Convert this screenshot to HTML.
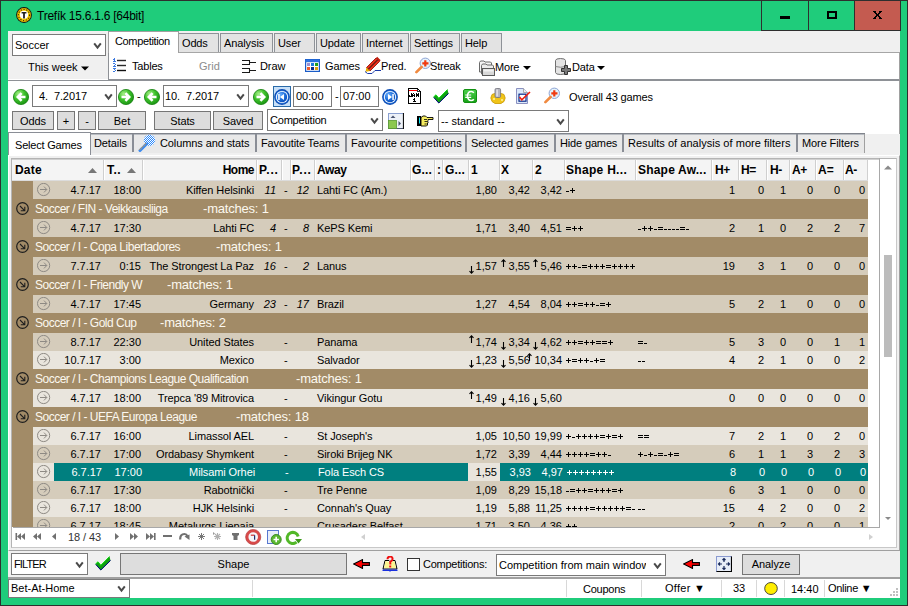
<!DOCTYPE html><html><head><meta charset="utf-8"><style>
*{margin:0;padding:0;box-sizing:border-box}
html,body{width:908px;height:606px;overflow:hidden;background:#2e2e2e}
body{position:relative;font-family:"Liberation Sans", sans-serif;font-size:11px;color:#000}
div,svg{position:absolute}
.t{white-space:nowrap;line-height:13px;font-size:11px}
.b{font-weight:bold}
</style></head><body><div style="left:1px;top:1px;width:906px;height:604px;background:#1fcc7b"></div>
<div style="left:8px;top:31px;width:892px;height:567px;background:#f0f0f0"></div>
<svg style="left:16px;top:7px" width="16" height="16" viewBox="0 0 16 16"><circle cx="8" cy="8" r="7.9" fill="#111"/><circle cx="8" cy="8" r="6.9" fill="#f0c800"/>
<circle cx="8" cy="8" r="5.6" fill="none" stroke="#3a2a00" stroke-width="1.1" stroke-dasharray="1.2 1.6"/><circle cx="8" cy="8" r="6.5" fill="none" stroke="#c89a00" stroke-width="0.6"/>
<circle cx="8" cy="7.8" r="4.1" fill="#fff"/><path d="M5.6 5 H10.4 V6.6 H8.9 V11.6 H7.1 V6.6 H5.6 Z" fill="#222"/></svg>
<div class="t" style="left:37px;top:8px;font-size:12px;line-height:16px;letter-spacing:-0.25px">Trefík 15.6.1.6 [64bit]</div>
<div style="left:761px;top:0px;width:140px;height:31px;border:1px solid #2e2e2e;background:#1fcc7b"></div>
<div style="left:808px;top:0px;width:1px;height:31px;background:#2e2e2e"></div>
<div style="left:854px;top:0px;width:1px;height:31px;background:#2e2e2e"></div>
<div style="left:855px;top:1px;width:45px;height:29px;background:#c45b50"></div>
<div style="left:780px;top:16px;width:10px;height:3px;background:#000"></div>
<div style="left:827px;top:11px;width:10px;height:8px;border:2px solid #000"></div>
<svg style="left:873px;top:11px" width="9" height="8" viewBox="0 0 9 8"><g fill="#000" shape-rendering="crispEdges"><rect x="0" y="0" width="1" height="1"/><rect x="1" y="0" width="1" height="1"/><rect x="2" y="0" width="1" height="1"/><rect x="6" y="0" width="1" height="1"/><rect x="7" y="0" width="1" height="1"/><rect x="8" y="0" width="1" height="1"/><rect x="1" y="1" width="1" height="1"/><rect x="2" y="1" width="1" height="1"/><rect x="6" y="1" width="1" height="1"/><rect x="7" y="1" width="1" height="1"/><rect x="2" y="2" width="1" height="1"/><rect x="3" y="2" width="1" height="1"/><rect x="5" y="2" width="1" height="1"/><rect x="6" y="2" width="1" height="1"/><rect x="3" y="3" width="1" height="1"/><rect x="4" y="3" width="1" height="1"/><rect x="5" y="3" width="1" height="1"/><rect x="3" y="4" width="1" height="1"/><rect x="4" y="4" width="1" height="1"/><rect x="5" y="4" width="1" height="1"/><rect x="2" y="5" width="1" height="1"/><rect x="3" y="5" width="1" height="1"/><rect x="5" y="5" width="1" height="1"/><rect x="6" y="5" width="1" height="1"/><rect x="1" y="6" width="1" height="1"/><rect x="2" y="6" width="1" height="1"/><rect x="6" y="6" width="1" height="1"/><rect x="7" y="6" width="1" height="1"/><rect x="0" y="7" width="1" height="1"/><rect x="1" y="7" width="1" height="1"/><rect x="2" y="7" width="1" height="1"/><rect x="6" y="7" width="1" height="1"/><rect x="7" y="7" width="1" height="1"/><rect x="8" y="7" width="1" height="1"/></g></svg>
<div style="left:12px;top:34px;width:94px;height:22px;border:1px solid #7a7a7a;background:#fff"></div>
<div style="left:13px;top:35px;width:73px;height:20px;overflow:hidden">
<div class="t" style="left:2px;top:4px;letter-spacing:0px">Soccer</div>
</div>
<svg style="left:93px;top:42px" width="9" height="8" viewBox="0 0 9 8"><path d="M1.2 1.3 L4.5 5.6 L7.8 1.3" stroke="#4a4a4a" stroke-width="2" fill="none"/></svg>
<div class="t" style="left:28px;top:61px;">This week</div>
<svg style="left:81px;top:66px" width="8" height="5" viewBox="0 0 8 5"><path d="M0 0.5 H8 L4 4.5 Z" fill="#000"/></svg>
<div style="left:178px;top:33px;width:41px;height:20px;background:#e3e3e3;border:1px solid #8e9298;border-bottom:none"></div>
<div class="t" style="left:182px;top:37px;letter-spacing:-0.15px">Odds</div>
<div style="left:220px;top:33px;width:53px;height:20px;background:#e3e3e3;border:1px solid #8e9298;border-bottom:none"></div>
<div class="t" style="left:224px;top:37px;letter-spacing:-0.1px">Analysis</div>
<div style="left:274px;top:33px;width:41px;height:20px;background:#e3e3e3;border:1px solid #8e9298;border-bottom:none"></div>
<div class="t" style="left:278px;top:37px;letter-spacing:-0.1px">User</div>
<div style="left:316px;top:33px;width:45px;height:20px;background:#e3e3e3;border:1px solid #8e9298;border-bottom:none"></div>
<div class="t" style="left:320px;top:37px;letter-spacing:-0.1px">Update</div>
<div style="left:362px;top:33px;width:47px;height:20px;background:#e3e3e3;border:1px solid #8e9298;border-bottom:none"></div>
<div class="t" style="left:366px;top:37px;letter-spacing:-0.1px">Internet</div>
<div style="left:410px;top:33px;width:50px;height:20px;background:#e3e3e3;border:1px solid #8e9298;border-bottom:none"></div>
<div class="t" style="left:414px;top:37px;letter-spacing:-0.1px">Settings</div>
<div style="left:461px;top:33px;width:41px;height:20px;background:#e3e3e3;border:1px solid #8e9298;border-bottom:none"></div>
<div class="t" style="left:465px;top:37px;letter-spacing:-0.1px">Help</div>
<div style="left:8px;top:79px;width:100px;height:1px;background:#fff"></div>
<div style="left:8px;top:80px;width:100px;height:1px;background:#8e9196"></div>
<div style="left:108px;top:52px;width:792px;height:29px;background:#fff;border-left:1px solid #8e9196;border-top:1px solid #a6a6a6;border-right:1px solid #a0a0a0;border-bottom:2px solid #8e9196"></div>
<div style="left:108px;top:31px;width:71px;height:22px;background:#fff;border:1px solid #a0a0a0;border-bottom:none"></div>
<div class="t" style="left:115px;top:35px;letter-spacing:-0.35px">Competition</div>
<svg style="left:112px;top:57px" width="15" height="16" viewBox="0 0 15 16"><rect x="2" y="1" width="1" height="1" fill="#3a78e0"/><rect x="1" y="2" width="1" height="1" fill="#3a78e0"/><rect x="2" y="2" width="1" height="1" fill="#3a78e0"/><rect x="2" y="3" width="1" height="1" fill="#3a78e0"/><rect x="1" y="4" width="1" height="1" fill="#3a78e0"/><rect x="2" y="4" width="1" height="1" fill="#3a78e0"/><rect x="3" y="4" width="1" height="1" fill="#3a78e0"/><rect x="1" y="6" width="1" height="1" fill="#3a78e0"/><rect x="2" y="6" width="1" height="1" fill="#3a78e0"/><rect x="3" y="7" width="1" height="1" fill="#3a78e0"/><rect x="2" y="8" width="1" height="1" fill="#3a78e0"/><rect x="1" y="9" width="1" height="1" fill="#3a78e0"/><rect x="2" y="9" width="1" height="1" fill="#3a78e0"/><rect x="3" y="9" width="1" height="1" fill="#3a78e0"/><rect x="1" y="11" width="1" height="1" fill="#3a78e0"/><rect x="2" y="11" width="1" height="1" fill="#3a78e0"/><rect x="3" y="11" width="1" height="1" fill="#3a78e0"/><rect x="2" y="12" width="1" height="1" fill="#3a78e0"/><rect x="3" y="13" width="1" height="1" fill="#3a78e0"/><rect x="1" y="14" width="1" height="1" fill="#3a78e0"/><rect x="2" y="14" width="1" height="1" fill="#3a78e0"/><rect x="5" y="2.8" width="9" height="1.4" fill="#2a2a2a"/><rect x="5" y="7.8" width="9" height="1.4" fill="#2a2a2a"/><rect x="5" y="12.8" width="9" height="1.4" fill="#111"/></svg>
<div class="t" style="left:132px;top:60px;letter-spacing:-0.2px">Tables</div>
<div class="t" style="left:199px;top:60px;color:#8c8c8c">Grid</div>
<svg style="left:241px;top:59px" width="16" height="15" viewBox="0 0 16 15"><path d="M1 1.5 H8.5 V5.5 H1 M8.5 3.5 H15 M1 9.5 H8.5 V13.5 H1 M8.5 11.5 H15" stroke="#1a1a1a" stroke-width="1.05" fill="none"/></svg>
<div class="t" style="left:260px;top:60px;letter-spacing:-0.1px">Draw</div>
<svg style="left:305px;top:59px" width="15" height="13" viewBox="0 0 15 13"><rect x="0.6" y="0.6" width="13.8" height="11.8" fill="#fff" stroke="#1a5cc8" stroke-width="1.2"/><rect x="0.6" y="0.6" width="13.8" height="2.6" fill="#2a74e0"/>
<rect x="2" y="4" width="3" height="3" fill="#9c8fd0"/><rect x="6" y="4" width="3" height="3" fill="#1a7ae0"/><rect x="10" y="4" width="3" height="3" fill="#20a020"/>
<rect x="2" y="8" width="3" height="3" fill="#f05a28"/><rect x="6" y="8" width="3" height="3" fill="#0a2a90"/><rect x="10" y="8" width="3" height="3" fill="#e0a010"/></svg>
<div class="t" style="left:325px;top:60px;letter-spacing:-0.1px">Games</div>
<svg style="left:364px;top:56px" width="18" height="19" viewBox="0 0 18 19"><path d="M2.5 11.5 L12 2 L15.5 5.5 L6 15 Z" fill="#e8301c" stroke="#8a0a00" stroke-width="0.8"/><path d="M4.2 13.3 L13.7 3.8" stroke="#111" stroke-width="1"/><path d="M12 2 L13.2 0.8 L16.7 4.3 L15.5 5.5 Z" fill="#c02010"/>
<path d="M2.5 11.5 L1.5 15.8 L6 15 Z" fill="#e8b000"/><path d="M1 15.5 L3.5 17.5 H8 L11 14.5 H17" stroke="#1a3aa8" stroke-width="1" fill="none"/></svg>
<div class="t" style="left:381px;top:60px;letter-spacing:-0.2px">Pred.</div>
<svg style="left:414px;top:57px" width="17" height="17" viewBox="0 0 17 17"><circle cx="11.3" cy="6.3" r="5.2" fill="#e4f3fc" stroke="#8fa4d4" stroke-width="1"/><path d="M11.3 3.3 V9.5 M8.3 6.4 H14.5" stroke="#f03a10" stroke-width="2.2"/>
<path d="M7.6 10 L2.4 15.2" stroke="#f08a40" stroke-width="2.6" stroke-linecap="round"/></svg>
<div class="t" style="left:430px;top:60px;letter-spacing:-0.2px">Streak</div>
<svg style="left:479px;top:60px" width="17" height="16" viewBox="0 0 17 16"><path d="M0.5 2.5 L1.5 1 H5 L6 2 H11.5 L12.5 3 V12 H0.5 Z" fill="#f4f4f4" stroke="#6a6a6a"/>
<path d="M2.5 5.5 L3.5 4 H7 L8 5 H13.5 L14.5 6 V14 H2.5 Z" fill="#ececec" stroke="#6a6a6a"/><rect x="3.5" y="8.5" width="12" height="7" fill="#d8d8d8" stroke="#5a5a5a"/><rect x="4.5" y="9.5" width="10" height="2" fill="#f2f2f2"/></svg>
<div class="t" style="left:495px;top:61px;letter-spacing:-0.2px">More</div>
<svg style="left:523px;top:66px" width="8" height="4" viewBox="0 0 8 4"><path d="M0 0 H8 L4.0 4 Z" fill="#000"/></svg>
<svg style="left:554px;top:58px" width="20" height="18" viewBox="0 0 20 18"><path d="M1.5 2.5 Q1.5 0.5 6.5 0.5 Q11.5 0.5 11.5 2.5 V14.5 Q11.5 16.5 6.5 16.5 Q1.5 16.5 1.5 14.5 Z" fill="#e4e4e4" stroke="#707070"/>
<path d="M1.5 8.5 Q6.5 10 11.5 8.5" stroke="#888" fill="none"/><path d="M7.5 10.5 H10.5 V7.5 H13.5 V10.5 H16.5 V13.5 H13.5 V16.5 H10.5 V13.5 H7.5 Z" fill="#7a7a7a" stroke="#333"/></svg>
<div class="t" style="left:572px;top:61px;letter-spacing:-0.1px">Data</div>
<svg style="left:597px;top:66px" width="8" height="4" viewBox="0 0 8 4"><path d="M0 0 H8 L4.0 4 Z" fill="#000"/></svg>
<div style="left:8px;top:81px;width:892px;height:53px;background:#fff;border-right:1px solid #a0a0a0"></div>
<svg style="left:13px;top:89px" width="16" height="16" viewBox="0 0 16 16"><defs><radialGradient id="g13" cx="0.35" cy="0.3" r="0.75"><stop offset="0" stop-color="#a8f08a"/><stop offset="0.5" stop-color="#3cc02a"/><stop offset="1" stop-color="#1a9412"/></radialGradient></defs>
<circle cx="8" cy="8" r="7.6" fill="url(#g13)" stroke="#14800e" stroke-width="0.8"/><path d="M12.5 8 H5 M8.6 4.2 L4.8 8 L8.6 11.8" stroke="#fff" stroke-width="2.6" fill="none"/></svg>
<div style="left:32px;top:85px;width:85px;height:22px;border:1px solid #7a7a7a;background:#fff"></div>
<div style="left:33px;top:86px;width:64px;height:20px;overflow:hidden">
<div class="t" style="left:6px;top:4px;letter-spacing:-0.1px">4.&nbsp; 7.2017</div>
</div>
<svg style="left:104px;top:93px" width="9" height="8" viewBox="0 0 9 8"><path d="M1.2 1.3 L4.5 5.6 L7.8 1.3" stroke="#4a4a4a" stroke-width="2" fill="none"/></svg>
<svg style="left:118px;top:89px" width="16" height="16" viewBox="0 0 16 16"><defs><radialGradient id="g118" cx="0.35" cy="0.3" r="0.75"><stop offset="0" stop-color="#a8f08a"/><stop offset="0.5" stop-color="#3cc02a"/><stop offset="1" stop-color="#1a9412"/></radialGradient></defs>
<circle cx="8" cy="8" r="7.6" fill="url(#g118)" stroke="#14800e" stroke-width="0.8"/><path d="M3.5 8 H11 M7.4 4.2 L11.2 8 L7.4 11.8" stroke="#fff" stroke-width="2.6" fill="none"/></svg>
<div class="t" style="left:137px;top:90px;">-</div>
<svg style="left:144px;top:89px" width="16" height="16" viewBox="0 0 16 16"><defs><radialGradient id="g144" cx="0.35" cy="0.3" r="0.75"><stop offset="0" stop-color="#a8f08a"/><stop offset="0.5" stop-color="#3cc02a"/><stop offset="1" stop-color="#1a9412"/></radialGradient></defs>
<circle cx="8" cy="8" r="7.6" fill="url(#g144)" stroke="#14800e" stroke-width="0.8"/><path d="M12.5 8 H5 M8.6 4.2 L4.8 8 L8.6 11.8" stroke="#fff" stroke-width="2.6" fill="none"/></svg>
<div style="left:163px;top:85px;width:86px;height:22px;border:1px solid #7a7a7a;background:#fff"></div>
<div style="left:164px;top:86px;width:65px;height:20px;overflow:hidden">
<div class="t" style="left:1px;top:4px;letter-spacing:-0.1px">10.&nbsp; 7.2017</div>
</div>
<svg style="left:236px;top:93px" width="9" height="8" viewBox="0 0 9 8"><path d="M1.2 1.3 L4.5 5.6 L7.8 1.3" stroke="#4a4a4a" stroke-width="2" fill="none"/></svg>
<svg style="left:253px;top:89px" width="16" height="16" viewBox="0 0 16 16"><defs><radialGradient id="g253" cx="0.35" cy="0.3" r="0.75"><stop offset="0" stop-color="#a8f08a"/><stop offset="0.5" stop-color="#3cc02a"/><stop offset="1" stop-color="#1a9412"/></radialGradient></defs>
<circle cx="8" cy="8" r="7.6" fill="url(#g253)" stroke="#14800e" stroke-width="0.8"/><path d="M3.5 8 H11 M7.4 4.2 L11.2 8 L7.4 11.8" stroke="#fff" stroke-width="2.6" fill="none"/></svg>
<div style="left:273px;top:86px;width:18px;height:21px;background:#c8e0f8;border:1px solid #2a6aa8"></div>
<svg style="left:274px;top:89px" width="16" height="16" viewBox="0 0 16 16"><defs><radialGradient id="b274" cx="0.35" cy="0.3" r="0.8"><stop offset="0" stop-color="#6ab0ff"/><stop offset="0.6" stop-color="#1a6ad8"/><stop offset="1" stop-color="#0a48b0"/></radialGradient></defs>
<circle cx="8" cy="8" r="7.9" fill="#0c4cb4"/><circle cx="8" cy="8" r="6.6" fill="#3a86e8"/><circle cx="8" cy="8" r="6.1" fill="#fff"/><circle cx="8" cy="8" r="5.2" fill="url(#b274)"/><path d="M10 5 L6 8 L10 11 Z" fill="#fff"/><rect x="4.2" y="5" width="1.5" height="6" fill="#fff"/></svg>
<div style="left:293px;top:86px;width:39px;height:21px;border:1px solid #7a7a7a;background:#fff"></div>
<div class="t" style="left:296px;top:90px;">00:00</div>
<div class="t" style="left:335px;top:90px;">-</div>
<div style="left:340px;top:86px;width:39px;height:21px;border:1px solid #7a7a7a;background:#fff"></div>
<div class="t" style="left:343px;top:90px;">07:00</div>
<svg style="left:382px;top:89px" width="16" height="16" viewBox="0 0 16 16"><defs><radialGradient id="b382" cx="0.35" cy="0.3" r="0.8"><stop offset="0" stop-color="#6ab0ff"/><stop offset="0.6" stop-color="#1a6ad8"/><stop offset="1" stop-color="#0a48b0"/></radialGradient></defs>
<circle cx="8" cy="8" r="7.9" fill="#0c4cb4"/><circle cx="8" cy="8" r="6.6" fill="#3a86e8"/><circle cx="8" cy="8" r="6.1" fill="#fff"/><circle cx="8" cy="8" r="5.2" fill="url(#b382)"/><path d="M6 5 L10 8 L6 11 Z" fill="#fff"/><rect x="10.3" y="5" width="1.5" height="6" fill="#fff"/></svg>
<svg style="left:408px;top:88px" width="13" height="16" viewBox="0 0 13 16"><g shape-rendering="crispEdges"><path d="M0.5 0.5 H9.5 L12.5 3.5 V15.5 H0.5 Z" fill="#fff" stroke="#000" stroke-width="1.2"/><path d="M9.5 0.5 V3.5 H12.5" fill="none" stroke="#000" stroke-width="0.8"/><rect x="1" y="2" width="8" height="1" fill="#f00"/><rect x="3" y="5" width="1" height="1" fill="#000"/><rect x="3" y="6" width="1" height="1" fill="#000"/><rect x="1" y="7" width="1" height="1" fill="#000"/><rect x="3" y="7" width="1" height="1" fill="#000"/><rect x="1" y="8" width="1" height="1" fill="#000"/><rect x="2" y="8" width="1" height="1" fill="#000"/><rect x="3" y="8" width="1" height="1" fill="#000"/><rect x="5" y="5" width="1" height="1" fill="#000"/><rect x="4" y="6" width="1" height="1" fill="#000"/><rect x="6" y="6" width="1" height="1" fill="#000"/><rect x="4" y="7" width="1" height="1" fill="#000"/><rect x="5" y="7" width="1" height="1" fill="#000"/><rect x="6" y="7" width="1" height="1" fill="#000"/><rect x="4" y="8" width="1" height="1" fill="#000"/><rect x="6" y="8" width="1" height="1" fill="#000"/><rect x="8" y="5" width="1" height="1" fill="#000"/><rect x="10" y="5" width="1" height="1" fill="#000"/><rect x="8" y="6" width="1" height="1" fill="#000"/><rect x="9" y="6" width="1" height="1" fill="#000"/><rect x="10" y="6" width="1" height="1" fill="#000"/><rect x="8" y="7" width="1" height="1" fill="#000"/><rect x="9" y="7" width="1" height="1" fill="#000"/><rect x="10" y="7" width="1" height="1" fill="#000"/><rect x="8" y="8" width="1" height="1" fill="#000"/><rect x="10" y="8" width="1" height="1" fill="#000"/><rect x="6" y="10" width="1" height="1" fill="#000"/><rect x="5" y="11" width="1" height="1" fill="#000"/><rect x="6" y="11" width="1" height="1" fill="#000"/><rect x="6" y="12" width="1" height="1" fill="#000"/><rect x="5" y="13" width="1" height="1" fill="#000"/><rect x="6" y="13" width="1" height="1" fill="#000"/><rect x="7" y="13" width="1" height="1" fill="#000"/></g></svg>
<svg style="left:433px;top:89px" width="16" height="15" viewBox="0 0 16 15"><path d="M0.5 8 L3 5.8 L5.8 9.2 L14.5 0.5 L15.5 4.5 L5.8 14.2 Z" fill="#10a010"/><path d="M0.5 8 L3 5.8 L5.8 9.2 L14.5 0.5" stroke="#00e000" stroke-width="0.9" fill="none"/><path d="M0.8 8.5 L5.8 14 L15.5 4.5" stroke="#000080" stroke-width="1" fill="none"/></svg>
<svg style="left:463px;top:89px" width="14" height="14" viewBox="0 0 14 14"><defs><linearGradient id="eu" x1="0" y1="0" x2="0" y2="1"><stop offset="0" stop-color="#4cd24c"/><stop offset="1" stop-color="#16a016"/></linearGradient></defs>
<rect x="0.5" y="0.5" width="13" height="13" rx="1.5" fill="url(#eu)" stroke="#129012"/><path d="M10.8 3.8 Q9.8 2.5 8.2 2.5 Q4.8 2.5 4.4 7 Q4.8 11.5 8.2 11.5 Q9.8 11.5 10.8 10.2" stroke="#fff" stroke-width="1.6" fill="none"/><path d="M2.2 6 H8.2 M2.2 8.3 H8.2" stroke="#fff" stroke-width="1.2"/></svg>
<svg style="left:490px;top:88px" width="16" height="16" viewBox="0 0 16 16"><path d="M0.8 10 L2 6.5 L4.5 5.5 H11.5 L14 6.5 L15.2 10 L14 13.5 L11 15.5 H5 L2 13.5 Z" fill="#f0c418" stroke="#c89800" stroke-width="0.8"/><circle cx="4" cy="11" r="1" fill="#fff3a0"/><circle cx="12" cy="12" r="1" fill="#fff3a0"/>
<rect x="5" y="0.5" width="5.6" height="9" rx="1.3" fill="#b4b4be" stroke="#70707a" stroke-width="0.8"/><rect x="6.4" y="1.5" width="1.4" height="7" fill="#e8e8ee"/></svg>
<svg style="left:516px;top:88px" width="15" height="16" viewBox="0 0 15 16"><path d="M0.5 0.5 H7.5 L11.5 4.5 V15.5 H0.5 Z" fill="#dbe8fa" stroke="#8a90c0"/><path d="M7.5 0.5 V4.5 H11.5" fill="#eee" stroke="#999" stroke-width="0.8"/>
<rect x="3" y="6.2" width="7" height="7" fill="#fff" stroke="#0a2a8a" stroke-width="1.2"/><path d="M3.5 9 L5.8 11.8 L14 4" stroke="#f02010" stroke-width="1.6" fill="none"/></svg>
<svg style="left:543px;top:87px" width="17" height="17" viewBox="0 0 17 17"><circle cx="11.3" cy="6.3" r="5.2" fill="#e4f3fc" stroke="#8fa4d4" stroke-width="1"/><path d="M11.3 3.3 V9.5 M8.3 6.4 H14.5" stroke="#f03a10" stroke-width="2.2"/>
<path d="M7.6 10 L2.4 15.2" stroke="#f08a40" stroke-width="2.6" stroke-linecap="round"/></svg>
<div class="t" style="left:569px;top:91px;letter-spacing:-0.15px">Overall 43 games</div>
<div style="left:12px;top:111px;width:42px;height:19px;background:#dddddd;border:1px solid #767676"></div>
<div class="t" style="left:12px;top:115px;width:42px;text-align:center;letter-spacing:-0.1px">Odds</div>
<div style="left:57px;top:111px;width:18px;height:19px;background:#dddddd;border:1px solid #767676"></div>
<div class="t" style="left:57px;top:115px;width:18px;text-align:center;letter-spacing:0px">+</div>
<div style="left:78px;top:111px;width:18px;height:19px;background:#dddddd;border:1px solid #767676"></div>
<div class="t" style="left:78px;top:115px;width:18px;text-align:center;letter-spacing:0px">-</div>
<div style="left:98px;top:111px;width:48px;height:19px;background:#dddddd;border:1px solid #767676"></div>
<div class="t" style="left:98px;top:115px;width:48px;text-align:center;letter-spacing:0px">Bet</div>
<div style="left:154px;top:111px;width:57px;height:19px;background:#dddddd;border:1px solid #767676"></div>
<div class="t" style="left:154px;top:115px;width:57px;text-align:center;letter-spacing:-0.1px">Stats</div>
<div style="left:213px;top:111px;width:50px;height:19px;background:#dddddd;border:1px solid #767676"></div>
<div class="t" style="left:213px;top:115px;width:50px;text-align:center;letter-spacing:-0.1px">Saved</div>
<div style="left:267px;top:109px;width:116px;height:22px;border:1px solid #7a7a7a;background:#fff"></div>
<div style="left:268px;top:110px;width:95px;height:20px;overflow:hidden">
<div class="t" style="left:2px;top:4px;letter-spacing:-0.2px">Competition</div>
</div>
<svg style="left:370px;top:117px" width="9" height="8" viewBox="0 0 9 8"><path d="M1.2 1.3 L4.5 5.6 L7.8 1.3" stroke="#4a4a4a" stroke-width="2" fill="none"/></svg>
<svg style="left:388px;top:113px" width="16" height="16" viewBox="0 0 16 16"><rect x="0.5" y="0.5" width="15" height="15" fill="#eef2f8" stroke="#8aa0d0"/><path d="M15.5 0 V16 H0" stroke="#111" stroke-width="1.2" fill="none"/>
<path d="M2.5 5 L5 2.5 L7.5 5 Z" fill="#4a5570"/><rect x="0.5" y="7.5" width="8" height="8" fill="#8cc850" stroke="#5a9a30" stroke-width="0.8"/><path d="M10.5 8 L13 10.5 L10.5 13 Z" fill="#4a5570"/></svg>
<svg style="left:417px;top:115px" width="17" height="12" viewBox="0 0 17 12"><rect x="0" y="1" width="4" height="10" fill="#000"/><rect x="2" y="2.5" width="1" height="6" fill="#10e8f8"/>
<path d="M4 2.5 L6 1 H8.5 L10 2.5 H16 V4.5 H11 V5.5 L10.5 6.5 H11 V8 L10 9 H10.5 V10 L9.5 11 H4 Z" fill="#f6ec60" stroke="#000" stroke-width="0.9"/>
<path d="M10 4.5 H7 M10 6.5 H7.5 M9.8 9 H7.5" stroke="#000" stroke-width="0.8"/></svg>
<div style="left:438px;top:110px;width:131px;height:22px;border:1px solid #7a7a7a;background:#fff"></div>
<div style="left:439px;top:111px;width:110px;height:20px;overflow:hidden">
<div class="t" style="left:2px;top:4px;letter-spacing:0px">-- standard --</div>
</div>
<svg style="left:556px;top:118px" width="9" height="8" viewBox="0 0 9 8"><path d="M1.2 1.3 L4.5 5.6 L7.8 1.3" stroke="#4a4a4a" stroke-width="2" fill="none"/></svg>
<div style="left:8px;top:134px;width:892px;height:21px;background:#f0f0f0"></div>
<div style="left:91px;top:133px;width:774px;height:1px;background:#80848c"></div>
<div style="left:91px;top:134px;width:774px;height:1px;background:#b8bcc2"></div>
<div style="left:91px;top:135px;width:42px;height:18px;background:#e9e9e9"></div>
<div style="left:132px;top:134px;width:2px;height:18px;background:#8a8e96"></div>
<div class="t" style="left:94px;top:137px;letter-spacing:-0.1px">Details</div>
<div style="left:134px;top:135px;width:122px;height:18px;background:#e9e9e9"></div>
<div style="left:255px;top:134px;width:2px;height:18px;background:#8a8e96"></div>
<div class="t" style="left:160px;top:137px;letter-spacing:-0.1px">Columns and stats</div>
<div style="left:257px;top:135px;width:89px;height:18px;background:#e9e9e9"></div>
<div style="left:345px;top:134px;width:2px;height:18px;background:#8a8e96"></div>
<div class="t" style="left:261px;top:137px;letter-spacing:-0.15px">Favoutite Teams</div>
<div style="left:347px;top:135px;width:119px;height:18px;background:#e9e9e9"></div>
<div style="left:465px;top:134px;width:2px;height:18px;background:#8a8e96"></div>
<div class="t" style="left:351px;top:137px;letter-spacing:0px">Favourite competitions</div>
<div style="left:467px;top:135px;width:88px;height:18px;background:#e9e9e9"></div>
<div style="left:554px;top:134px;width:2px;height:18px;background:#8a8e96"></div>
<div class="t" style="left:471px;top:137px;letter-spacing:-0.1px">Selected games</div>
<div style="left:556px;top:135px;width:67px;height:18px;background:#e9e9e9"></div>
<div style="left:622px;top:134px;width:2px;height:18px;background:#8a8e96"></div>
<div class="t" style="left:560px;top:137px;letter-spacing:-0.15px">Hide games</div>
<div style="left:624px;top:135px;width:173px;height:18px;background:#e9e9e9"></div>
<div style="left:796px;top:134px;width:2px;height:18px;background:#8a8e96"></div>
<div class="t" style="left:628px;top:137px;letter-spacing:0.03px">Results of analysis of more filters</div>
<div style="left:798px;top:135px;width:67px;height:18px;background:#e9e9e9"></div>
<div class="t" style="left:802px;top:137px;letter-spacing:-0.1px">More Filters</div>
<div style="left:864px;top:134px;width:1px;height:19px;background:#a0a0a0"></div>
<svg style="left:138px;top:134px" width="18" height="18" viewBox="0 0 18 18"><defs><pattern id="chk" width="2" height="2" patternUnits="userSpaceOnUse"><rect width="2" height="2" fill="#2a8aff"/><rect width="1" height="1" fill="#fff"/><rect x="1" y="1" width="1" height="1" fill="#fff"/></pattern></defs>
<circle cx="11.5" cy="6.3" r="5.6" fill="url(#chk)"/><path d="M8.5 10 L2 16.5" stroke="#3a8af0" stroke-width="3" stroke-linecap="round"/><path d="M8 9.5 L1.5 16" stroke="#f0a030" stroke-width="1.1" stroke-dasharray="1 1"/></svg>
<div style="left:8px;top:132px;width:83px;height:24px;background:#fff;border:1px solid #8a8e96;border-bottom:none"></div>
<div class="t" style="left:15px;top:139px;letter-spacing:-0.2px">Select Games</div>
<div style="left:8px;top:155px;width:892px;height:396px;background:#f0f0f0;border-right:1px solid #a0a0a0;border-bottom:1px solid #a0a0a0;border-left:1px solid #fff;border-top:1px solid #fff"></div>
<div style="left:11px;top:158px;width:886px;height:390px;background:#fff;border:1px solid #b4b4b4;border-right-color:#c8c8c8;border-bottom-color:#c8c8c8"></div>
<div style="left:12px;top:159px;width:868px;height:1px;background:#d0d0d0"></div>
<div style="left:12px;top:160px;width:856px;height:21px;background:#f4f4f4;border-bottom:1px solid #dcdcdc"></div>
<div style="left:103px;top:160px;width:1px;height:20px;background:#cfcfcf"></div>
<div style="left:104px;top:160px;width:1px;height:20px;background:#fff"></div>
<div style="left:142px;top:160px;width:1px;height:20px;background:#cfcfcf"></div>
<div style="left:143px;top:160px;width:1px;height:20px;background:#fff"></div>
<div style="left:256px;top:160px;width:1px;height:20px;background:#cfcfcf"></div>
<div style="left:257px;top:160px;width:1px;height:20px;background:#fff"></div>
<div style="left:281px;top:160px;width:1px;height:20px;background:#cfcfcf"></div>
<div style="left:282px;top:160px;width:1px;height:20px;background:#fff"></div>
<div style="left:290px;top:160px;width:1px;height:20px;background:#cfcfcf"></div>
<div style="left:291px;top:160px;width:1px;height:20px;background:#fff"></div>
<div style="left:314px;top:160px;width:1px;height:20px;background:#cfcfcf"></div>
<div style="left:315px;top:160px;width:1px;height:20px;background:#fff"></div>
<div style="left:410px;top:160px;width:1px;height:20px;background:#cfcfcf"></div>
<div style="left:411px;top:160px;width:1px;height:20px;background:#fff"></div>
<div style="left:434px;top:160px;width:1px;height:20px;background:#cfcfcf"></div>
<div style="left:435px;top:160px;width:1px;height:20px;background:#fff"></div>
<div style="left:442px;top:160px;width:1px;height:20px;background:#cfcfcf"></div>
<div style="left:443px;top:160px;width:1px;height:20px;background:#fff"></div>
<div style="left:468px;top:160px;width:1px;height:20px;background:#cfcfcf"></div>
<div style="left:469px;top:160px;width:1px;height:20px;background:#fff"></div>
<div style="left:499px;top:160px;width:1px;height:20px;background:#cfcfcf"></div>
<div style="left:500px;top:160px;width:1px;height:20px;background:#fff"></div>
<div style="left:532px;top:160px;width:1px;height:20px;background:#cfcfcf"></div>
<div style="left:533px;top:160px;width:1px;height:20px;background:#fff"></div>
<div style="left:564px;top:160px;width:1px;height:20px;background:#cfcfcf"></div>
<div style="left:565px;top:160px;width:1px;height:20px;background:#fff"></div>
<div style="left:635px;top:160px;width:1px;height:20px;background:#cfcfcf"></div>
<div style="left:636px;top:160px;width:1px;height:20px;background:#fff"></div>
<div style="left:711px;top:160px;width:1px;height:20px;background:#cfcfcf"></div>
<div style="left:712px;top:160px;width:1px;height:20px;background:#fff"></div>
<div style="left:738px;top:160px;width:1px;height:20px;background:#cfcfcf"></div>
<div style="left:739px;top:160px;width:1px;height:20px;background:#fff"></div>
<div style="left:766px;top:160px;width:1px;height:20px;background:#cfcfcf"></div>
<div style="left:767px;top:160px;width:1px;height:20px;background:#fff"></div>
<div style="left:789px;top:160px;width:1px;height:20px;background:#cfcfcf"></div>
<div style="left:790px;top:160px;width:1px;height:20px;background:#fff"></div>
<div style="left:815px;top:160px;width:1px;height:20px;background:#cfcfcf"></div>
<div style="left:816px;top:160px;width:1px;height:20px;background:#fff"></div>
<div style="left:843px;top:160px;width:1px;height:20px;background:#cfcfcf"></div>
<div style="left:844px;top:160px;width:1px;height:20px;background:#fff"></div>
<div style="left:867px;top:159px;width:1px;height:21px;background:#d0d0d0"></div>
<div class="t b" style="left:15px;top:164px;font-size:12px;letter-spacing:0.2px">Date</div>
<div class="t b" style="left:107px;top:164px;font-size:12px;letter-spacing:0.5px">T..</div>
<div class="t b" style="left:259px;top:164px;font-size:12px;letter-spacing:0.8px">P...</div>
<div class="t b" style="left:292px;top:164px;font-size:12px;letter-spacing:0.8px">P...</div>
<div class="t b" style="left:317px;top:164px;font-size:12px;letter-spacing:-0.4px">Away</div>
<div class="t b" style="left:412px;top:164px;font-size:12px;letter-spacing:0.2px">G...</div>
<div class="t b" style="left:437px;top:164px;font-size:12px;letter-spacing:0px">:</div>
<div class="t b" style="left:445px;top:164px;font-size:12px;letter-spacing:0.2px">G...</div>
<div class="t b" style="left:471px;top:164px;font-size:12px;letter-spacing:0px">1</div>
<div class="t b" style="left:501px;top:164px;font-size:12px;letter-spacing:0px">X</div>
<div class="t b" style="left:535px;top:164px;font-size:12px;letter-spacing:0px">2</div>
<div class="t b" style="left:566px;top:164px;font-size:12px;letter-spacing:0.3px">Shape H...</div>
<div class="t b" style="left:638px;top:164px;font-size:12px;letter-spacing:0.2px">Shape Aw...</div>
<div class="t b" style="left:715px;top:164px;font-size:12px;letter-spacing:-0.4px">H+</div>
<div class="t b" style="left:741px;top:164px;font-size:12px;letter-spacing:-0.3px">H=</div>
<div class="t b" style="left:770px;top:164px;font-size:12px;letter-spacing:-0.3px">H-</div>
<div class="t b" style="left:792px;top:164px;font-size:12px;letter-spacing:-0.3px">A+</div>
<div class="t b" style="left:818px;top:164px;font-size:12px;letter-spacing:0px">A=</div>
<div class="t b" style="left:845px;top:164px;font-size:12px;letter-spacing:-0.4px">A-</div>
<div class="t b" style="right:654px;top:164px;font-size:12px;letter-spacing:-0.5px">Home</div>
<svg style="left:88px;top:168px" width="9" height="5" viewBox="0 0 9 5"><path d="M0 5 L4.5 0 L9 5 Z" fill="#777"/></svg>
<svg style="left:127px;top:168px" width="9" height="5" viewBox="0 0 9 5"><path d="M0 5 L4.5 0 L9 5 Z" fill="#777"/></svg>
<div style="left:12px;top:181px;width:856px;height:346px;background:#a28b67"></div>
<div style="left:0;top:0;width:908px;height:527px;overflow:hidden">
<div style="left:33px;top:181px;width:835px;height:18px;background:#d5ccbb"></div>
<svg style="left:37px;top:183px" width="14" height="14" viewBox="0 0 14 14"><circle cx="6.6" cy="6.5" r="6.1" fill="none" stroke="#8e8a84" stroke-width="1"/><path d="M3 6.5 H9.7 M7 3.6 L9.8 6.5 L7 9.4" stroke="#8e8a84" stroke-width="1" fill="none"/></svg>
<div class="t" style="right:807px;top:184px;color:#000">4.7.17</div>
<div class="t" style="right:767px;top:184px;color:#000">18:00</div>
<div class="t" style="right:654px;top:184px;color:#000;letter-spacing:-0.1px">Kiffen Helsinki</div>
<div class="t" style="right:632px;top:184px;font-style:italic;color:#000">11</div>
<div class="t" style="left:284px;top:184px;color:#000">-</div>
<div class="t" style="right:599px;top:184px;font-style:italic;color:#000">12</div>
<div class="t" style="left:317px;top:184px;color:#000;letter-spacing:-0.1px">Lahti FC (Am.)</div>
<div class="t" style="right:411px;top:184px;color:#000">1,80</div>
<div class="t" style="right:378px;top:184px;color:#000">3,42</div>
<div class="t" style="right:346px;top:184px;color:#000">3,42</div>
<svg style="left:566px;top:187px" width="10" height="7" viewBox="0 0 10 7"><g fill="#000" shape-rendering="crispEdges"><rect x="0" y="4" width="3" height="1"/><rect x="4" y="3" width="5" height="1"/><rect x="6" y="1" width="1" height="5"/></g></svg>
<div class="t" style="right:173px;top:184px;color:#000">1</div>
<div class="t" style="right:144px;top:184px;color:#000">0</div>
<div class="t" style="right:122px;top:184px;color:#000">1</div>
<div class="t" style="right:95px;top:184px;color:#000">0</div>
<div class="t" style="right:68px;top:184px;color:#000">0</div>
<div class="t" style="right:43px;top:184px;color:#000">0</div>
<svg style="left:16px;top:202px" width="13" height="13" viewBox="0 0 13 13"><circle cx="6.5" cy="6.5" r="5.8" fill="none" stroke="#1e1e1e" stroke-width="1.2"/><path d="M4 4 L8.6 8.6 M8.8 4.8 V8.8 H4.8" stroke="#1e1e1e" stroke-width="1.1" fill="none"/></svg>
<div class="t" style="left:35px;top:201px;font-size:12px;line-height:16px;letter-spacing:-0.5px;color:#fcf8ef">Soccer / FIN - Veikkausliiga</div>
<div class="t" style="left:203px;top:201px;font-size:13px;line-height:16px;letter-spacing:-0.2px;color:#fcf8ef">-matches: 1</div>
<div style="left:33px;top:219px;width:835px;height:18px;background:#d5ccbb"></div>
<svg style="left:37px;top:221px" width="14" height="14" viewBox="0 0 14 14"><circle cx="6.6" cy="6.5" r="6.1" fill="none" stroke="#8e8a84" stroke-width="1"/><path d="M3 6.5 H9.7 M7 3.6 L9.8 6.5 L7 9.4" stroke="#8e8a84" stroke-width="1" fill="none"/></svg>
<div class="t" style="right:807px;top:222px;color:#000">4.7.17</div>
<div class="t" style="right:767px;top:222px;color:#000">17:30</div>
<div class="t" style="right:654px;top:222px;color:#000;letter-spacing:-0.1px">Lahti FC</div>
<div class="t" style="right:632px;top:222px;font-style:italic;color:#000">4</div>
<div class="t" style="left:284px;top:222px;color:#000">-</div>
<div class="t" style="right:599px;top:222px;font-style:italic;color:#000">8</div>
<div class="t" style="left:317px;top:222px;color:#000;letter-spacing:-0.1px">KePS Kemi</div>
<div class="t" style="right:411px;top:222px;color:#000">1,71</div>
<div class="t" style="right:378px;top:222px;color:#000">3,40</div>
<div class="t" style="right:346px;top:222px;color:#000">4,51</div>
<svg style="left:566px;top:225px" width="18" height="7" viewBox="0 0 18 7"><g fill="#000" shape-rendering="crispEdges"><rect x="0" y="2" width="5" height="1"/><rect x="0" y="4" width="5" height="1"/><rect x="6" y="3" width="5" height="1"/><rect x="8" y="1" width="1" height="5"/><rect x="12" y="3" width="5" height="1"/><rect x="14" y="1" width="1" height="5"/></g></svg>
<svg style="left:638px;top:225px" width="52" height="7" viewBox="0 0 52 7"><g fill="#000" shape-rendering="crispEdges"><rect x="0" y="4" width="3" height="1"/><rect x="4" y="3" width="5" height="1"/><rect x="6" y="1" width="1" height="5"/><rect x="10" y="3" width="5" height="1"/><rect x="12" y="1" width="1" height="5"/><rect x="16" y="4" width="3" height="1"/><rect x="20" y="2" width="5" height="1"/><rect x="20" y="4" width="5" height="1"/><rect x="26" y="4" width="3" height="1"/><rect x="30" y="4" width="3" height="1"/><rect x="34" y="4" width="3" height="1"/><rect x="38" y="4" width="3" height="1"/><rect x="42" y="2" width="5" height="1"/><rect x="42" y="4" width="5" height="1"/><rect x="48" y="4" width="3" height="1"/></g></svg>
<div class="t" style="right:173px;top:222px;color:#000">2</div>
<div class="t" style="right:144px;top:222px;color:#000">1</div>
<div class="t" style="right:122px;top:222px;color:#000">0</div>
<div class="t" style="right:95px;top:222px;color:#000">2</div>
<div class="t" style="right:68px;top:222px;color:#000">2</div>
<div class="t" style="right:43px;top:222px;color:#000">7</div>
<svg style="left:16px;top:240px" width="13" height="13" viewBox="0 0 13 13"><circle cx="6.5" cy="6.5" r="5.8" fill="none" stroke="#1e1e1e" stroke-width="1.2"/><path d="M4 4 L8.6 8.6 M8.8 4.8 V8.8 H4.8" stroke="#1e1e1e" stroke-width="1.1" fill="none"/></svg>
<div class="t" style="left:35px;top:239px;font-size:12px;line-height:16px;letter-spacing:-0.5px;color:#fcf8ef">Soccer / I - Copa Libertadores</div>
<div class="t" style="left:216px;top:239px;font-size:13px;line-height:16px;letter-spacing:-0.2px;color:#fcf8ef">-matches: 1</div>
<div style="left:33px;top:257px;width:835px;height:18px;background:#d5ccbb"></div>
<svg style="left:37px;top:259px" width="14" height="14" viewBox="0 0 14 14"><circle cx="6.6" cy="6.5" r="6.1" fill="none" stroke="#8e8a84" stroke-width="1"/><path d="M3 6.5 H9.7 M7 3.6 L9.8 6.5 L7 9.4" stroke="#8e8a84" stroke-width="1" fill="none"/></svg>
<div class="t" style="right:807px;top:260px;color:#000">7.7.17</div>
<div class="t" style="right:767px;top:260px;color:#000">0:15</div>
<div class="t" style="right:654px;top:260px;color:#000;letter-spacing:-0.1px">The Strongest La Paz</div>
<div class="t" style="right:632px;top:260px;font-style:italic;color:#000">16</div>
<div class="t" style="left:284px;top:260px;color:#000">-</div>
<div class="t" style="right:599px;top:260px;font-style:italic;color:#000">2</div>
<div class="t" style="left:317px;top:260px;color:#000;letter-spacing:-0.1px">Lanus</div>
<div class="t" style="right:411px;top:260px;color:#000">1,57</div>
<svg style="left:469px;top:266px" width="5" height="8" viewBox="0 0 5 8"><path d="M2.5 0 V7.2 M0.5 5.2 L2.5 7.2 L4.5 5.2" stroke="#000" stroke-width="1.1" fill="none"/></svg>
<div class="t" style="right:378px;top:260px;color:#000">3,55</div>
<svg style="left:501px;top:259px" width="5" height="8" viewBox="0 0 5 8"><path d="M2.5 0.8 V8 M0.5 2.8 L2.5 0.8 L4.5 2.8" stroke="#000" stroke-width="1.1" fill="none"/></svg>
<div class="t" style="right:346px;top:260px;color:#000">5,46</div>
<svg style="left:533px;top:259px" width="5" height="8" viewBox="0 0 5 8"><path d="M2.5 0.8 V8 M0.5 2.8 L2.5 0.8 L4.5 2.8" stroke="#000" stroke-width="1.1" fill="none"/></svg>
<svg style="left:566px;top:263px" width="70" height="7" viewBox="0 0 70 7"><g fill="#000" shape-rendering="crispEdges"><rect x="0" y="3" width="5" height="1"/><rect x="2" y="1" width="1" height="5"/><rect x="6" y="3" width="5" height="1"/><rect x="8" y="1" width="1" height="5"/><rect x="12" y="4" width="3" height="1"/><rect x="16" y="2" width="5" height="1"/><rect x="16" y="4" width="5" height="1"/><rect x="22" y="3" width="5" height="1"/><rect x="24" y="1" width="1" height="5"/><rect x="28" y="3" width="5" height="1"/><rect x="30" y="1" width="1" height="5"/><rect x="34" y="3" width="5" height="1"/><rect x="36" y="1" width="1" height="5"/><rect x="40" y="2" width="5" height="1"/><rect x="40" y="4" width="5" height="1"/><rect x="46" y="3" width="5" height="1"/><rect x="48" y="1" width="1" height="5"/><rect x="52" y="3" width="5" height="1"/><rect x="54" y="1" width="1" height="5"/><rect x="58" y="3" width="5" height="1"/><rect x="60" y="1" width="1" height="5"/><rect x="64" y="3" width="5" height="1"/><rect x="66" y="1" width="1" height="5"/></g></svg>
<div class="t" style="right:173px;top:260px;color:#000">19</div>
<div class="t" style="right:144px;top:260px;color:#000">3</div>
<div class="t" style="right:122px;top:260px;color:#000">1</div>
<div class="t" style="right:95px;top:260px;color:#000">0</div>
<div class="t" style="right:68px;top:260px;color:#000">0</div>
<div class="t" style="right:43px;top:260px;color:#000">0</div>
<svg style="left:16px;top:278px" width="13" height="13" viewBox="0 0 13 13"><circle cx="6.5" cy="6.5" r="5.8" fill="none" stroke="#1e1e1e" stroke-width="1.2"/><path d="M4 4 L8.6 8.6 M8.8 4.8 V8.8 H4.8" stroke="#1e1e1e" stroke-width="1.1" fill="none"/></svg>
<div class="t" style="left:35px;top:277px;font-size:12px;line-height:16px;letter-spacing:-0.5px;color:#fcf8ef">Soccer / I - Friendly W</div>
<div class="t" style="left:167px;top:277px;font-size:13px;line-height:16px;letter-spacing:-0.2px;color:#fcf8ef">-matches: 1</div>
<div style="left:33px;top:295px;width:835px;height:18px;background:#d5ccbb"></div>
<svg style="left:37px;top:297px" width="14" height="14" viewBox="0 0 14 14"><circle cx="6.6" cy="6.5" r="6.1" fill="none" stroke="#8e8a84" stroke-width="1"/><path d="M3 6.5 H9.7 M7 3.6 L9.8 6.5 L7 9.4" stroke="#8e8a84" stroke-width="1" fill="none"/></svg>
<div class="t" style="right:807px;top:298px;color:#000">4.7.17</div>
<div class="t" style="right:767px;top:298px;color:#000">17:45</div>
<div class="t" style="right:654px;top:298px;color:#000;letter-spacing:-0.1px">Germany</div>
<div class="t" style="right:632px;top:298px;font-style:italic;color:#000">23</div>
<div class="t" style="left:284px;top:298px;color:#000">-</div>
<div class="t" style="right:599px;top:298px;font-style:italic;color:#000">17</div>
<div class="t" style="left:317px;top:298px;color:#000;letter-spacing:-0.1px">Brazil</div>
<div class="t" style="right:411px;top:298px;color:#000">1,27</div>
<div class="t" style="right:378px;top:298px;color:#000">4,54</div>
<div class="t" style="right:346px;top:298px;color:#000">8,04</div>
<svg style="left:566px;top:301px" width="46" height="7" viewBox="0 0 46 7"><g fill="#000" shape-rendering="crispEdges"><rect x="0" y="3" width="5" height="1"/><rect x="2" y="1" width="1" height="5"/><rect x="6" y="3" width="5" height="1"/><rect x="8" y="1" width="1" height="5"/><rect x="12" y="2" width="5" height="1"/><rect x="12" y="4" width="5" height="1"/><rect x="18" y="3" width="5" height="1"/><rect x="20" y="1" width="1" height="5"/><rect x="24" y="3" width="5" height="1"/><rect x="26" y="1" width="1" height="5"/><rect x="30" y="4" width="3" height="1"/><rect x="34" y="2" width="5" height="1"/><rect x="34" y="4" width="5" height="1"/><rect x="40" y="3" width="5" height="1"/><rect x="42" y="1" width="1" height="5"/></g></svg>
<div class="t" style="right:173px;top:298px;color:#000">5</div>
<div class="t" style="right:144px;top:298px;color:#000">2</div>
<div class="t" style="right:122px;top:298px;color:#000">1</div>
<div class="t" style="right:95px;top:298px;color:#000">0</div>
<div class="t" style="right:68px;top:298px;color:#000">0</div>
<div class="t" style="right:43px;top:298px;color:#000">0</div>
<svg style="left:16px;top:316px" width="13" height="13" viewBox="0 0 13 13"><circle cx="6.5" cy="6.5" r="5.8" fill="none" stroke="#1e1e1e" stroke-width="1.2"/><path d="M4 4 L8.6 8.6 M8.8 4.8 V8.8 H4.8" stroke="#1e1e1e" stroke-width="1.1" fill="none"/></svg>
<div class="t" style="left:35px;top:315px;font-size:12px;line-height:16px;letter-spacing:-0.5px;color:#fcf8ef">Soccer / I - Gold Cup</div>
<div class="t" style="left:160px;top:315px;font-size:13px;line-height:16px;letter-spacing:-0.2px;color:#fcf8ef">-matches: 2</div>
<div style="left:33px;top:333px;width:835px;height:18px;background:#d5ccbb"></div>
<svg style="left:37px;top:335px" width="14" height="14" viewBox="0 0 14 14"><circle cx="6.6" cy="6.5" r="6.1" fill="none" stroke="#8e8a84" stroke-width="1"/><path d="M3 6.5 H9.7 M7 3.6 L9.8 6.5 L7 9.4" stroke="#8e8a84" stroke-width="1" fill="none"/></svg>
<div class="t" style="right:807px;top:336px;color:#000">8.7.17</div>
<div class="t" style="right:767px;top:336px;color:#000">22:30</div>
<div class="t" style="right:654px;top:336px;color:#000;letter-spacing:-0.1px">United States</div>
<div class="t" style="left:284px;top:336px;color:#000">-</div>
<div class="t" style="left:317px;top:336px;color:#000;letter-spacing:-0.1px">Panama</div>
<div class="t" style="right:411px;top:336px;color:#000">1,74</div>
<svg style="left:469px;top:335px" width="5" height="8" viewBox="0 0 5 8"><path d="M2.5 0.8 V8 M0.5 2.8 L2.5 0.8 L4.5 2.8" stroke="#000" stroke-width="1.1" fill="none"/></svg>
<div class="t" style="right:378px;top:336px;color:#000">3,34</div>
<svg style="left:501px;top:342px" width="5" height="8" viewBox="0 0 5 8"><path d="M2.5 0 V7.2 M0.5 5.2 L2.5 7.2 L4.5 5.2" stroke="#000" stroke-width="1.1" fill="none"/></svg>
<div class="t" style="right:346px;top:336px;color:#000">4,62</div>
<svg style="left:533px;top:342px" width="5" height="8" viewBox="0 0 5 8"><path d="M2.5 0 V7.2 M0.5 5.2 L2.5 7.2 L4.5 5.2" stroke="#000" stroke-width="1.1" fill="none"/></svg>
<svg style="left:566px;top:339px" width="48" height="7" viewBox="0 0 48 7"><g fill="#000" shape-rendering="crispEdges"><rect x="0" y="3" width="5" height="1"/><rect x="2" y="1" width="1" height="5"/><rect x="6" y="3" width="5" height="1"/><rect x="8" y="1" width="1" height="5"/><rect x="12" y="2" width="5" height="1"/><rect x="12" y="4" width="5" height="1"/><rect x="18" y="3" width="5" height="1"/><rect x="20" y="1" width="1" height="5"/><rect x="24" y="3" width="5" height="1"/><rect x="26" y="1" width="1" height="5"/><rect x="30" y="2" width="5" height="1"/><rect x="30" y="4" width="5" height="1"/><rect x="36" y="2" width="5" height="1"/><rect x="36" y="4" width="5" height="1"/><rect x="42" y="3" width="5" height="1"/><rect x="44" y="1" width="1" height="5"/></g></svg>
<svg style="left:638px;top:339px" width="10" height="7" viewBox="0 0 10 7"><g fill="#000" shape-rendering="crispEdges"><rect x="0" y="2" width="5" height="1"/><rect x="0" y="4" width="5" height="1"/><rect x="6" y="4" width="3" height="1"/></g></svg>
<div class="t" style="right:173px;top:336px;color:#000">5</div>
<div class="t" style="right:144px;top:336px;color:#000">3</div>
<div class="t" style="right:122px;top:336px;color:#000">0</div>
<div class="t" style="right:95px;top:336px;color:#000">0</div>
<div class="t" style="right:68px;top:336px;color:#000">1</div>
<div class="t" style="right:43px;top:336px;color:#000">1</div>
<div style="left:33px;top:351px;width:835px;height:18px;background:#e9e5dd"></div>
<svg style="left:37px;top:353px" width="14" height="14" viewBox="0 0 14 14"><circle cx="6.6" cy="6.5" r="6.1" fill="none" stroke="#8e8a84" stroke-width="1"/><path d="M3 6.5 H9.7 M7 3.6 L9.8 6.5 L7 9.4" stroke="#8e8a84" stroke-width="1" fill="none"/></svg>
<div class="t" style="right:807px;top:354px;color:#000">10.7.17</div>
<div class="t" style="right:767px;top:354px;color:#000">3:00</div>
<div class="t" style="right:654px;top:354px;color:#000;letter-spacing:-0.1px">Mexico</div>
<div class="t" style="left:284px;top:354px;color:#000">-</div>
<div class="t" style="left:317px;top:354px;color:#000;letter-spacing:-0.1px">Salvador</div>
<div class="t" style="right:411px;top:354px;color:#000">1,23</div>
<svg style="left:469px;top:360px" width="5" height="8" viewBox="0 0 5 8"><path d="M2.5 0 V7.2 M0.5 5.2 L2.5 7.2 L4.5 5.2" stroke="#000" stroke-width="1.1" fill="none"/></svg>
<div class="t" style="right:378px;top:354px;color:#000">5,56</div>
<svg style="left:501px;top:360px" width="5" height="8" viewBox="0 0 5 8"><path d="M2.5 0 V7.2 M0.5 5.2 L2.5 7.2 L4.5 5.2" stroke="#000" stroke-width="1.1" fill="none"/></svg>
<div class="t" style="right:346px;top:354px;color:#000">10,34</div>
<svg style="left:527px;top:353px" width="5" height="8" viewBox="0 0 5 8"><path d="M2.5 0.8 V8 M0.5 2.8 L2.5 0.8 L4.5 2.8" stroke="#000" stroke-width="1.1" fill="none"/></svg>
<svg style="left:566px;top:357px" width="40" height="7" viewBox="0 0 40 7"><g fill="#000" shape-rendering="crispEdges"><rect x="0" y="3" width="5" height="1"/><rect x="2" y="1" width="1" height="5"/><rect x="6" y="2" width="5" height="1"/><rect x="6" y="4" width="5" height="1"/><rect x="12" y="3" width="5" height="1"/><rect x="14" y="1" width="1" height="5"/><rect x="18" y="3" width="5" height="1"/><rect x="20" y="1" width="1" height="5"/><rect x="24" y="4" width="3" height="1"/><rect x="28" y="3" width="5" height="1"/><rect x="30" y="1" width="1" height="5"/><rect x="34" y="2" width="5" height="1"/><rect x="34" y="4" width="5" height="1"/></g></svg>
<svg style="left:638px;top:357px" width="8" height="7" viewBox="0 0 8 7"><g fill="#000" shape-rendering="crispEdges"><rect x="0" y="4" width="3" height="1"/><rect x="4" y="4" width="3" height="1"/></g></svg>
<div class="t" style="right:173px;top:354px;color:#000">4</div>
<div class="t" style="right:144px;top:354px;color:#000">2</div>
<div class="t" style="right:122px;top:354px;color:#000">1</div>
<div class="t" style="right:95px;top:354px;color:#000">0</div>
<div class="t" style="right:68px;top:354px;color:#000">0</div>
<div class="t" style="right:43px;top:354px;color:#000">2</div>
<svg style="left:16px;top:372px" width="13" height="13" viewBox="0 0 13 13"><circle cx="6.5" cy="6.5" r="5.8" fill="none" stroke="#1e1e1e" stroke-width="1.2"/><path d="M4 4 L8.6 8.6 M8.8 4.8 V8.8 H4.8" stroke="#1e1e1e" stroke-width="1.1" fill="none"/></svg>
<div class="t" style="left:35px;top:371px;font-size:12px;line-height:16px;letter-spacing:-0.5px;color:#fcf8ef">Soccer / I - Champions League Qualification</div>
<div class="t" style="left:296px;top:371px;font-size:13px;line-height:16px;letter-spacing:-0.2px;color:#fcf8ef">-matches: 1</div>
<div style="left:33px;top:389px;width:835px;height:18px;background:#e9e5dd"></div>
<svg style="left:37px;top:391px" width="14" height="14" viewBox="0 0 14 14"><circle cx="6.6" cy="6.5" r="6.1" fill="none" stroke="#8e8a84" stroke-width="1"/><path d="M3 6.5 H9.7 M7 3.6 L9.8 6.5 L7 9.4" stroke="#8e8a84" stroke-width="1" fill="none"/></svg>
<div class="t" style="right:807px;top:392px;color:#000">4.7.17</div>
<div class="t" style="right:767px;top:392px;color:#000">18:00</div>
<div class="t" style="right:654px;top:392px;color:#000;letter-spacing:-0.1px">Trepca '89 Mitrovica</div>
<div class="t" style="left:284px;top:392px;color:#000">-</div>
<div class="t" style="left:317px;top:392px;color:#000;letter-spacing:-0.1px">Vikingur Gotu</div>
<div class="t" style="right:411px;top:392px;color:#000">1,49</div>
<svg style="left:469px;top:391px" width="5" height="8" viewBox="0 0 5 8"><path d="M2.5 0.8 V8 M0.5 2.8 L2.5 0.8 L4.5 2.8" stroke="#000" stroke-width="1.1" fill="none"/></svg>
<div class="t" style="right:378px;top:392px;color:#000">4,16</div>
<svg style="left:501px;top:398px" width="5" height="8" viewBox="0 0 5 8"><path d="M2.5 0 V7.2 M0.5 5.2 L2.5 7.2 L4.5 5.2" stroke="#000" stroke-width="1.1" fill="none"/></svg>
<div class="t" style="right:346px;top:392px;color:#000">5,60</div>
<svg style="left:533px;top:398px" width="5" height="8" viewBox="0 0 5 8"><path d="M2.5 0 V7.2 M0.5 5.2 L2.5 7.2 L4.5 5.2" stroke="#000" stroke-width="1.1" fill="none"/></svg>
<div class="t" style="right:173px;top:392px;color:#000">0</div>
<div class="t" style="right:144px;top:392px;color:#000">0</div>
<div class="t" style="right:122px;top:392px;color:#000">0</div>
<div class="t" style="right:95px;top:392px;color:#000">0</div>
<div class="t" style="right:68px;top:392px;color:#000">0</div>
<div class="t" style="right:43px;top:392px;color:#000">0</div>
<svg style="left:16px;top:410px" width="13" height="13" viewBox="0 0 13 13"><circle cx="6.5" cy="6.5" r="5.8" fill="none" stroke="#1e1e1e" stroke-width="1.2"/><path d="M4 4 L8.6 8.6 M8.8 4.8 V8.8 H4.8" stroke="#1e1e1e" stroke-width="1.1" fill="none"/></svg>
<div class="t" style="left:35px;top:409px;font-size:12px;line-height:16px;letter-spacing:-0.5px;color:#fcf8ef">Soccer / I - UEFA Europa League</div>
<div class="t" style="left:236px;top:409px;font-size:13px;line-height:16px;letter-spacing:-0.2px;color:#fcf8ef">-matches: 18</div>
<div style="left:33px;top:427px;width:835px;height:18px;background:#e9e5dd"></div>
<svg style="left:37px;top:429px" width="14" height="14" viewBox="0 0 14 14"><circle cx="6.6" cy="6.5" r="6.1" fill="none" stroke="#8e8a84" stroke-width="1"/><path d="M3 6.5 H9.7 M7 3.6 L9.8 6.5 L7 9.4" stroke="#8e8a84" stroke-width="1" fill="none"/></svg>
<div class="t" style="right:807px;top:430px;color:#000">6.7.17</div>
<div class="t" style="right:767px;top:430px;color:#000">16:00</div>
<div class="t" style="right:654px;top:430px;color:#000;letter-spacing:-0.1px">Limassol AEL</div>
<div class="t" style="left:284px;top:430px;color:#000">-</div>
<div class="t" style="left:317px;top:430px;color:#000;letter-spacing:-0.1px">St Joseph's</div>
<div class="t" style="right:411px;top:430px;color:#000">1,05</div>
<div class="t" style="right:378px;top:430px;color:#000">10,50</div>
<div class="t" style="right:346px;top:430px;color:#000">19,99</div>
<svg style="left:566px;top:433px" width="58" height="7" viewBox="0 0 58 7"><g fill="#000" shape-rendering="crispEdges"><rect x="0" y="3" width="5" height="1"/><rect x="2" y="1" width="1" height="5"/><rect x="6" y="4" width="3" height="1"/><rect x="10" y="3" width="5" height="1"/><rect x="12" y="1" width="1" height="5"/><rect x="16" y="3" width="5" height="1"/><rect x="18" y="1" width="1" height="5"/><rect x="22" y="3" width="5" height="1"/><rect x="24" y="1" width="1" height="5"/><rect x="28" y="3" width="5" height="1"/><rect x="30" y="1" width="1" height="5"/><rect x="34" y="2" width="5" height="1"/><rect x="34" y="4" width="5" height="1"/><rect x="40" y="3" width="5" height="1"/><rect x="42" y="1" width="1" height="5"/><rect x="46" y="2" width="5" height="1"/><rect x="46" y="4" width="5" height="1"/><rect x="52" y="3" width="5" height="1"/><rect x="54" y="1" width="1" height="5"/></g></svg>
<svg style="left:638px;top:433px" width="12" height="7" viewBox="0 0 12 7"><g fill="#000" shape-rendering="crispEdges"><rect x="0" y="2" width="5" height="1"/><rect x="0" y="4" width="5" height="1"/><rect x="6" y="2" width="5" height="1"/><rect x="6" y="4" width="5" height="1"/></g></svg>
<div class="t" style="right:173px;top:430px;color:#000">7</div>
<div class="t" style="right:144px;top:430px;color:#000">2</div>
<div class="t" style="right:122px;top:430px;color:#000">1</div>
<div class="t" style="right:95px;top:430px;color:#000">0</div>
<div class="t" style="right:68px;top:430px;color:#000">2</div>
<div class="t" style="right:43px;top:430px;color:#000">0</div>
<div style="left:33px;top:445px;width:835px;height:18px;background:#d5ccbb"></div>
<svg style="left:37px;top:447px" width="14" height="14" viewBox="0 0 14 14"><circle cx="6.6" cy="6.5" r="6.1" fill="none" stroke="#8e8a84" stroke-width="1"/><path d="M3 6.5 H9.7 M7 3.6 L9.8 6.5 L7 9.4" stroke="#8e8a84" stroke-width="1" fill="none"/></svg>
<div class="t" style="right:807px;top:448px;color:#000">6.7.17</div>
<div class="t" style="right:767px;top:448px;color:#000">17:00</div>
<div class="t" style="right:654px;top:448px;color:#000;letter-spacing:-0.1px">Ordabasy Shymkent</div>
<div class="t" style="left:284px;top:448px;color:#000">-</div>
<div class="t" style="left:317px;top:448px;color:#000;letter-spacing:-0.1px">Siroki Brijeg NK</div>
<div class="t" style="right:411px;top:448px;color:#000">1,72</div>
<div class="t" style="right:378px;top:448px;color:#000">3,39</div>
<div class="t" style="right:346px;top:448px;color:#000">4,44</div>
<svg style="left:566px;top:451px" width="46" height="7" viewBox="0 0 46 7"><g fill="#000" shape-rendering="crispEdges"><rect x="0" y="3" width="5" height="1"/><rect x="2" y="1" width="1" height="5"/><rect x="6" y="3" width="5" height="1"/><rect x="8" y="1" width="1" height="5"/><rect x="12" y="3" width="5" height="1"/><rect x="14" y="1" width="1" height="5"/><rect x="18" y="3" width="5" height="1"/><rect x="20" y="1" width="1" height="5"/><rect x="24" y="2" width="5" height="1"/><rect x="24" y="4" width="5" height="1"/><rect x="30" y="3" width="5" height="1"/><rect x="32" y="1" width="1" height="5"/><rect x="36" y="3" width="5" height="1"/><rect x="38" y="1" width="1" height="5"/><rect x="42" y="4" width="3" height="1"/></g></svg>
<svg style="left:638px;top:451px" width="42" height="7" viewBox="0 0 42 7"><g fill="#000" shape-rendering="crispEdges"><rect x="0" y="3" width="5" height="1"/><rect x="2" y="1" width="1" height="5"/><rect x="6" y="4" width="3" height="1"/><rect x="10" y="3" width="5" height="1"/><rect x="12" y="1" width="1" height="5"/><rect x="16" y="4" width="3" height="1"/><rect x="20" y="2" width="5" height="1"/><rect x="20" y="4" width="5" height="1"/><rect x="26" y="4" width="3" height="1"/><rect x="30" y="3" width="5" height="1"/><rect x="32" y="1" width="1" height="5"/><rect x="36" y="2" width="5" height="1"/><rect x="36" y="4" width="5" height="1"/></g></svg>
<div class="t" style="right:173px;top:448px;color:#000">6</div>
<div class="t" style="right:144px;top:448px;color:#000">1</div>
<div class="t" style="right:122px;top:448px;color:#000">1</div>
<div class="t" style="right:95px;top:448px;color:#000">3</div>
<div class="t" style="right:68px;top:448px;color:#000">2</div>
<div class="t" style="right:43px;top:448px;color:#000">3</div>
<div style="left:33px;top:463px;width:835px;height:18px;background:#e9e5dd"></div>
<div style="left:54px;top:463px;width:414px;height:18px;background:#007f7f"></div>
<div style="left:500px;top:463px;width:368px;height:18px;background:#007f7f"></div>
<svg style="left:37px;top:465px" width="14" height="14" viewBox="0 0 14 14"><circle cx="6.6" cy="6.5" r="6.1" fill="none" stroke="#8e8a84" stroke-width="1"/><path d="M3 6.5 H9.7 M7 3.6 L9.8 6.5 L7 9.4" stroke="#8e8a84" stroke-width="1" fill="none"/></svg>
<div class="t" style="right:806px;top:466px;color:#fff">6.7.17</div>
<div class="t" style="right:766px;top:466px;color:#fff">17:00</div>
<div class="t" style="right:653px;top:466px;color:#fff;letter-spacing:-0.1px">Milsami Orhei</div>
<div class="t" style="left:285px;top:466px;color:#fff">-</div>
<div class="t" style="left:318px;top:466px;color:#fff;letter-spacing:-0.1px">Fola Esch CS</div>
<div class="t" style="right:411px;top:466px;color:#000">1,55</div>
<div class="t" style="right:377px;top:466px;color:#fff">3,93</div>
<div class="t" style="right:345px;top:466px;color:#fff">4,97</div>
<svg style="left:567px;top:469px" width="48" height="7" viewBox="0 0 48 7"><g fill="#fff" shape-rendering="crispEdges"><rect x="0" y="3" width="5" height="1"/><rect x="2" y="1" width="1" height="5"/><rect x="6" y="3" width="5" height="1"/><rect x="8" y="1" width="1" height="5"/><rect x="12" y="3" width="5" height="1"/><rect x="14" y="1" width="1" height="5"/><rect x="18" y="3" width="5" height="1"/><rect x="20" y="1" width="1" height="5"/><rect x="24" y="3" width="5" height="1"/><rect x="26" y="1" width="1" height="5"/><rect x="30" y="3" width="5" height="1"/><rect x="32" y="1" width="1" height="5"/><rect x="36" y="3" width="5" height="1"/><rect x="38" y="1" width="1" height="5"/><rect x="42" y="3" width="5" height="1"/><rect x="44" y="1" width="1" height="5"/></g></svg>
<div class="t" style="right:172px;top:466px;color:#fff">8</div>
<div class="t" style="right:143px;top:466px;color:#fff">0</div>
<div class="t" style="right:121px;top:466px;color:#fff">0</div>
<div class="t" style="right:94px;top:466px;color:#fff">0</div>
<div class="t" style="right:67px;top:466px;color:#fff">0</div>
<div class="t" style="right:42px;top:466px;color:#fff">0</div>
<div style="left:33px;top:481px;width:835px;height:18px;background:#d5ccbb"></div>
<svg style="left:37px;top:483px" width="14" height="14" viewBox="0 0 14 14"><circle cx="6.6" cy="6.5" r="6.1" fill="none" stroke="#8e8a84" stroke-width="1"/><path d="M3 6.5 H9.7 M7 3.6 L9.8 6.5 L7 9.4" stroke="#8e8a84" stroke-width="1" fill="none"/></svg>
<div class="t" style="right:807px;top:484px;color:#000">6.7.17</div>
<div class="t" style="right:767px;top:484px;color:#000">17:30</div>
<div class="t" style="right:654px;top:484px;color:#000;letter-spacing:-0.1px">Rabotnički</div>
<div class="t" style="left:284px;top:484px;color:#000">-</div>
<div class="t" style="left:317px;top:484px;color:#000;letter-spacing:-0.1px">Tre Penne</div>
<div class="t" style="right:411px;top:484px;color:#000">1,09</div>
<div class="t" style="right:378px;top:484px;color:#000">8,29</div>
<div class="t" style="right:346px;top:484px;color:#000">15,18</div>
<svg style="left:566px;top:487px" width="58" height="7" viewBox="0 0 58 7"><g fill="#000" shape-rendering="crispEdges"><rect x="0" y="4" width="3" height="1"/><rect x="4" y="2" width="5" height="1"/><rect x="4" y="4" width="5" height="1"/><rect x="10" y="3" width="5" height="1"/><rect x="12" y="1" width="1" height="5"/><rect x="16" y="3" width="5" height="1"/><rect x="18" y="1" width="1" height="5"/><rect x="22" y="2" width="5" height="1"/><rect x="22" y="4" width="5" height="1"/><rect x="28" y="3" width="5" height="1"/><rect x="30" y="1" width="1" height="5"/><rect x="34" y="3" width="5" height="1"/><rect x="36" y="1" width="1" height="5"/><rect x="40" y="3" width="5" height="1"/><rect x="42" y="1" width="1" height="5"/><rect x="46" y="2" width="5" height="1"/><rect x="46" y="4" width="5" height="1"/><rect x="52" y="3" width="5" height="1"/><rect x="54" y="1" width="1" height="5"/></g></svg>
<div class="t" style="right:173px;top:484px;color:#000">6</div>
<div class="t" style="right:144px;top:484px;color:#000">3</div>
<div class="t" style="right:122px;top:484px;color:#000">1</div>
<div class="t" style="right:95px;top:484px;color:#000">0</div>
<div class="t" style="right:68px;top:484px;color:#000">0</div>
<div class="t" style="right:43px;top:484px;color:#000">0</div>
<div style="left:33px;top:499px;width:835px;height:18px;background:#e9e5dd"></div>
<svg style="left:37px;top:501px" width="14" height="14" viewBox="0 0 14 14"><circle cx="6.6" cy="6.5" r="6.1" fill="none" stroke="#8e8a84" stroke-width="1"/><path d="M3 6.5 H9.7 M7 3.6 L9.8 6.5 L7 9.4" stroke="#8e8a84" stroke-width="1" fill="none"/></svg>
<div class="t" style="right:807px;top:502px;color:#000">6.7.17</div>
<div class="t" style="right:767px;top:502px;color:#000">18:00</div>
<div class="t" style="right:654px;top:502px;color:#000;letter-spacing:-0.1px">HJK Helsinki</div>
<div class="t" style="left:284px;top:502px;color:#000">-</div>
<div class="t" style="left:317px;top:502px;color:#000;letter-spacing:-0.1px">Connah's Quay</div>
<div class="t" style="right:411px;top:502px;color:#000">1,19</div>
<div class="t" style="right:378px;top:502px;color:#000">5,88</div>
<div class="t" style="right:346px;top:502px;color:#000">11,25</div>
<svg style="left:566px;top:505px" width="70" height="7" viewBox="0 0 70 7"><g fill="#000" shape-rendering="crispEdges"><rect x="0" y="3" width="5" height="1"/><rect x="2" y="1" width="1" height="5"/><rect x="6" y="3" width="5" height="1"/><rect x="8" y="1" width="1" height="5"/><rect x="12" y="3" width="5" height="1"/><rect x="14" y="1" width="1" height="5"/><rect x="18" y="3" width="5" height="1"/><rect x="20" y="1" width="1" height="5"/><rect x="24" y="2" width="5" height="1"/><rect x="24" y="4" width="5" height="1"/><rect x="30" y="3" width="5" height="1"/><rect x="32" y="1" width="1" height="5"/><rect x="36" y="3" width="5" height="1"/><rect x="38" y="1" width="1" height="5"/><rect x="42" y="3" width="5" height="1"/><rect x="44" y="1" width="1" height="5"/><rect x="48" y="3" width="5" height="1"/><rect x="50" y="1" width="1" height="5"/><rect x="54" y="3" width="5" height="1"/><rect x="56" y="1" width="1" height="5"/><rect x="60" y="2" width="5" height="1"/><rect x="60" y="4" width="5" height="1"/><rect x="66" y="4" width="3" height="1"/></g></svg>
<svg style="left:638px;top:505px" width="8" height="7" viewBox="0 0 8 7"><g fill="#000" shape-rendering="crispEdges"><rect x="0" y="4" width="3" height="1"/><rect x="4" y="4" width="3" height="1"/></g></svg>
<div class="t" style="right:173px;top:502px;color:#000">15</div>
<div class="t" style="right:144px;top:502px;color:#000">4</div>
<div class="t" style="right:122px;top:502px;color:#000">2</div>
<div class="t" style="right:95px;top:502px;color:#000">0</div>
<div class="t" style="right:68px;top:502px;color:#000">0</div>
<div class="t" style="right:43px;top:502px;color:#000">2</div>
<div style="left:33px;top:517px;width:835px;height:18px;background:#d5ccbb"></div>
<svg style="left:37px;top:519px" width="14" height="14" viewBox="0 0 14 14"><circle cx="6.6" cy="6.5" r="6.1" fill="none" stroke="#8e8a84" stroke-width="1"/><path d="M3 6.5 H9.7 M7 3.6 L9.8 6.5 L7 9.4" stroke="#8e8a84" stroke-width="1" fill="none"/></svg>
<div class="t" style="right:807px;top:520px;color:#000">6.7.17</div>
<div class="t" style="right:767px;top:520px;color:#000">18:45</div>
<div class="t" style="right:654px;top:520px;color:#000;letter-spacing:-0.1px">Metalurgs Liepaja</div>
<div class="t" style="left:284px;top:520px;color:#000">-</div>
<div class="t" style="left:317px;top:520px;color:#000;letter-spacing:-0.1px">Crusaders Belfast</div>
<div class="t" style="right:411px;top:520px;color:#000">1,71</div>
<div class="t" style="right:378px;top:520px;color:#000">3,50</div>
<div class="t" style="right:346px;top:520px;color:#000">4,36</div>
<svg style="left:566px;top:523px" width="12" height="7" viewBox="0 0 12 7"><g fill="#000" shape-rendering="crispEdges"><rect x="0" y="3" width="5" height="1"/><rect x="2" y="1" width="1" height="5"/><rect x="6" y="3" width="5" height="1"/><rect x="8" y="1" width="1" height="5"/></g></svg>
<div class="t" style="right:173px;top:520px;color:#000">2</div>
<div class="t" style="right:144px;top:520px;color:#000">0</div>
<div class="t" style="right:122px;top:520px;color:#000">2</div>
<div class="t" style="right:95px;top:520px;color:#000">0</div>
<div class="t" style="right:68px;top:520px;color:#000">0</div>
<div class="t" style="right:43px;top:520px;color:#000">1</div>
</div>
<div style="left:879px;top:158px;width:1px;height:370px;background:#a8a8a8"></div>
<div style="left:13px;top:527px;width:867px;height:1px;background:#a8a8a8"></div>
<svg style="left:884px;top:165px" width="8" height="5" viewBox="0 0 8 5"><path d="M0 4.5 L4 0.5 L8 4.5 Z" fill="#8a8a8a"/></svg>
<div style="left:884px;top:255px;width:8px;height:102px;background:#bcbcbc"></div>
<svg style="left:885px;top:517px" width="6" height="3" viewBox="0 0 6 3"><path d="M0 0 L3 3 L6 0 Z" fill="#8a8a8a"/></svg>
<svg style="left:15px;top:533px" width="11" height="7" viewBox="0 0 11 7"><rect x="0.5" y="0" width="1.6" height="7" fill="#707070"/><path d="M2 3.5 L6 0 V7 Z M6 3.5 L10 0 V7 Z" fill="#707070"/></svg>
<svg style="left:33px;top:533px" width="8" height="7" viewBox="0 0 8 7"><path d="M0 3.5 L4 0 V7 Z M4 3.5 L8 0 V7 Z" fill="#707070"/></svg>
<svg style="left:52px;top:533px" width="4" height="7" viewBox="0 0 4 7"><path d="M0 3.5 L4 0 V7 Z" fill="#707070"/></svg>
<div class="t" style="left:68px;top:531px;color:#333;letter-spacing:-0.1px">18 / 43</div>
<svg style="left:115px;top:533px" width="4" height="7" viewBox="0 0 4 7"><path d="M4 3.5 L0 0 V7 Z" fill="#707070"/></svg>
<svg style="left:130px;top:533px" width="8" height="7" viewBox="0 0 8 7"><path d="M4 3.5 L0 0 V7 Z M8 3.5 L4 0 V7 Z" fill="#707070"/></svg>
<svg style="left:146px;top:533px" width="10" height="7" viewBox="0 0 10 7"><path d="M4 3.5 L0 0 V7 Z M8 3.5 L4 0 V7 Z" fill="#707070"/><rect x="8" y="0" width="1.6" height="7" fill="#707070"/></svg>
<div style="left:163px;top:535px;width:9px;height:2px;background:#707070"></div>
<svg style="left:179px;top:532px" width="11" height="8" viewBox="0 0 11 8"><path d="M1.2 7.5 Q1 2 5.5 2 Q7.5 2 8.3 4" stroke="#707070" stroke-width="2.2" fill="none"/><path d="M5.5 4.5 L10.5 2.5 V8 Z" fill="#707070"/></svg>
<svg style="left:198px;top:533px" width="7" height="7" viewBox="0 0 7 7"><path d="M3.5 0 V7 M0 3.5 H7 M1 1 L6 6 M6 1 L1 6" stroke="#6a6a6a" stroke-width="0.9"/></svg>
<svg style="left:213px;top:532px" width="10" height="8" viewBox="0 0 10 8"><path d="M4.5 1 V8 M1 4.5 H8 M2 2 L7 7 M7 2 L2 7" stroke="#b0b0b0" stroke-width="1.1"/><path d="M0 0 L2 1.5 L0 3 Z" fill="#999"/></svg>
<svg style="left:232px;top:533px" width="8" height="7" viewBox="0 0 8 7"><path d="M0 0 H7 V2 L5.5 3 V7 H1.5 V3 L0 2 Z" fill="#707070"/></svg>
<svg style="left:245px;top:529px" width="17" height="16" viewBox="0 0 17 16"><circle cx="8.2" cy="8" r="6.2" fill="#f4f6fa" stroke="#d84a4a" stroke-width="2.8"/><circle cx="8.2" cy="8" r="7.6" fill="none" stroke="#b03030" stroke-width="0.6"/><path d="M5.8 6.2 H9.6" stroke="#d03030" stroke-width="1.2"/><path d="M9.6 6.2 V10.8" stroke="#203070" stroke-width="1.2"/></svg>
<svg style="left:267px;top:530px" width="15" height="15" viewBox="0 0 15 15"><rect x="0.5" y="0.5" width="11" height="13" fill="#e8eefa" stroke="#5878d0"/><circle cx="9.2" cy="9.5" r="5" fill="#5ab830" stroke="#3a8a20"/><path d="M9.2 6.8 V12.2 M6.5 9.5 H11.9" stroke="#fff" stroke-width="1.6"/></svg>
<svg style="left:285px;top:530px" width="18" height="15" viewBox="0 0 18 15"><path d="M11.5 12.2 A5.6 5.6 0 1 1 13.2 6.5" stroke="#52b828" stroke-width="3" fill="none"/><path d="M10 9 H17 L13.5 13.5 Z" fill="#3a9a18"/></svg>
<svg style="left:361px;top:534px" width="4" height="6" viewBox="0 0 4 6"><path d="M4 0 L0 3 L4 6 Z" fill="#d0d0d0"/></svg>
<svg style="left:869px;top:534px" width="4" height="6" viewBox="0 0 4 6"><path d="M0 0 L4 3 L0 6 Z" fill="#d0d0d0"/></svg>
<div style="left:11px;top:553px;width:77px;height:22px;border:1px solid #7a7a7a;background:#fff"></div>
<div style="left:12px;top:554px;width:56px;height:20px;overflow:hidden">
<div class="t" style="left:2px;top:4px;letter-spacing:-0.9px">FILTER</div>
</div>
<svg style="left:75px;top:561px" width="9" height="8" viewBox="0 0 9 8"><path d="M1.2 1.3 L4.5 5.6 L7.8 1.3" stroke="#4a4a4a" stroke-width="2" fill="none"/></svg>
<svg style="left:95px;top:556px" width="16" height="15" viewBox="0 0 16 15"><path d="M0.5 8 L3 5.8 L5.8 9.2 L14.5 0.5 L15.5 4.5 L5.8 14.2 Z" fill="#10a010"/><path d="M0.5 8 L3 5.8 L5.8 9.2 L14.5 0.5" stroke="#00e000" stroke-width="0.9" fill="none"/><path d="M0.8 8.5 L5.8 14 L15.5 4.5" stroke="#000080" stroke-width="1" fill="none"/></svg>
<div style="left:120px;top:553px;width:227px;height:22px;background:#dddddd;border:1px solid #767676"></div>
<div class="t" style="left:120px;top:558px;width:227px;text-align:center;letter-spacing:0px">Shape</div>
<svg style="left:353px;top:559px" width="18" height="10" viewBox="0 0 18 10"><path d="M0.6 5 L9.5 0.6 V3.6 H16.4 V6.4 H9.5 V9.4 Z" fill="#ff0000" stroke="#000" stroke-width="1.1" stroke-linejoin="miter"/></svg>
<svg style="left:382px;top:556px" width="16" height="16" viewBox="0 0 16 16"><path d="M1 13 L3 4.5 H7 L8 5.5 L9 4.5 H13 L15 13 Z" fill="#fff" stroke="#000" stroke-width="1"/><path d="M3.5 5 L2 12 H7.5 V6 Z M12.5 5 L14 12 H8.5 V6 Z" fill="#f8f060" opacity="0.7"/>
<path d="M0.5 13.5 H15.5 V15 H9 L8 15.8 L7 15 H0.5 Z" fill="#1a30e0"/><path d="M5.5 3.2 Q5.5 0.6 8 0.6 Q10.6 0.6 10.6 3 Q10.6 4.6 8.3 5.8 V8.5" stroke="#f01010" stroke-width="2" fill="none"/><rect x="7.2" y="9.5" width="2" height="2" fill="#f01010"/></svg>
<div style="left:407px;top:558px;width:13px;height:13px;background:#fff;border:1px solid #333"></div>
<div class="t" style="left:423px;top:558px;letter-spacing:-0.25px">Competitions:</div>
<div style="left:496px;top:554px;width:170px;height:22px;border:1px solid #7a7a7a;background:#fff"></div>
<div style="left:497px;top:555px;width:149px;height:20px;overflow:hidden">
<div class="t" style="left:2px;top:4px;letter-spacing:0px">Competition from main window</div>
</div>
<svg style="left:653px;top:562px" width="9" height="8" viewBox="0 0 9 8"><path d="M1.2 1.3 L4.5 5.6 L7.8 1.3" stroke="#4a4a4a" stroke-width="2" fill="none"/></svg>
<svg style="left:683px;top:559px" width="18" height="10" viewBox="0 0 18 10"><path d="M0.6 5 L9.5 0.6 V3.6 H16.4 V6.4 H9.5 V9.4 Z" fill="#ff0000" stroke="#000" stroke-width="1.1" stroke-linejoin="miter"/></svg>
<svg style="left:716px;top:556px" width="16" height="16" viewBox="0 0 16 16"><rect x="0.5" y="0.5" width="15" height="15" fill="#e8eef8" stroke="#8a9ad0"/><path d="M15.5 0.5 V15.5 H0.5" stroke="#000" stroke-width="1.2" fill="none"/>
<path d="M8 2.5 V6 M8 10 V13.5 M2.5 8 H6 M10 8 H13.5 M6.5 4 L8 2.5 L9.5 4 M6.5 12 L8 13.5 L9.5 12 M4 6.5 L2.5 8 L4 9.5 M12 6.5 L13.5 8 L12 9.5" stroke="#1a2a5a" stroke-width="1.2" fill="none"/></svg>
<div style="left:742px;top:554px;width:58px;height:21px;background:#dddddd;border:1px solid #767676"></div>
<div class="t" style="left:742px;top:558px;width:58px;text-align:center;letter-spacing:-0.1px">Analyze</div>
<div style="left:8px;top:577px;width:892px;height:2px;background:#a0a0a0"></div>
<div style="left:8px;top:579px;width:892px;height:19px;background:#fff"></div>
<div style="left:8px;top:579px;width:122px;height:19px;border:1px solid #7a7a7a;background:#fff"></div>
<div style="left:9px;top:580px;width:101px;height:17px;overflow:hidden">
<div class="t" style="left:2px;top:2px;letter-spacing:0px">Bet-At-Home</div>
</div>
<svg style="left:117px;top:585px" width="9" height="8" viewBox="0 0 9 8"><path d="M1.2 1.3 L4.5 5.6 L7.8 1.3" stroke="#4a4a4a" stroke-width="2" fill="none"/></svg>
<div style="left:252px;top:580px;width:1px;height:17px;background:#d8d8d8"></div>
<div style="left:566px;top:580px;width:1px;height:17px;background:#d8d8d8"></div>
<div style="left:641px;top:580px;width:1px;height:17px;background:#d8d8d8"></div>
<div style="left:721px;top:580px;width:1px;height:17px;background:#d8d8d8"></div>
<div style="left:756px;top:580px;width:1px;height:17px;background:#d8d8d8"></div>
<div style="left:784px;top:580px;width:1px;height:17px;background:#d8d8d8"></div>
<div style="left:824px;top:580px;width:1px;height:17px;background:#d8d8d8"></div>
<div class="t" style="left:583px;top:583px;letter-spacing:-0.25px">Coupons</div>
<div class="t" style="left:665px;top:582px;letter-spacing:0.3px">Offer ▼</div>
<div class="t" style="left:733px;top:582px;">33</div>
<svg style="left:764px;top:582px" width="14" height="13" viewBox="0 0 14 13"><ellipse cx="7" cy="6.5" rx="6.3" ry="6" fill="#ffee00" stroke="#333" stroke-width="0.9"/></svg>
<div class="t" style="left:791px;top:583px;">14:40</div>
<div class="t" style="left:828px;top:582px;letter-spacing:-0.3px">Online ▼</div>
<div style="left:896px;top:588px;width:2px;height:2px;background:#c0c0c0"></div>
<div style="left:893px;top:591px;width:2px;height:2px;background:#c0c0c0"></div>
<div style="left:896px;top:591px;width:2px;height:2px;background:#c0c0c0"></div>
<div style="left:890px;top:594px;width:2px;height:2px;background:#c0c0c0"></div>
<div style="left:893px;top:594px;width:2px;height:2px;background:#c0c0c0"></div>
<div style="left:896px;top:594px;width:2px;height:2px;background:#c0c0c0"></div></body></html>
